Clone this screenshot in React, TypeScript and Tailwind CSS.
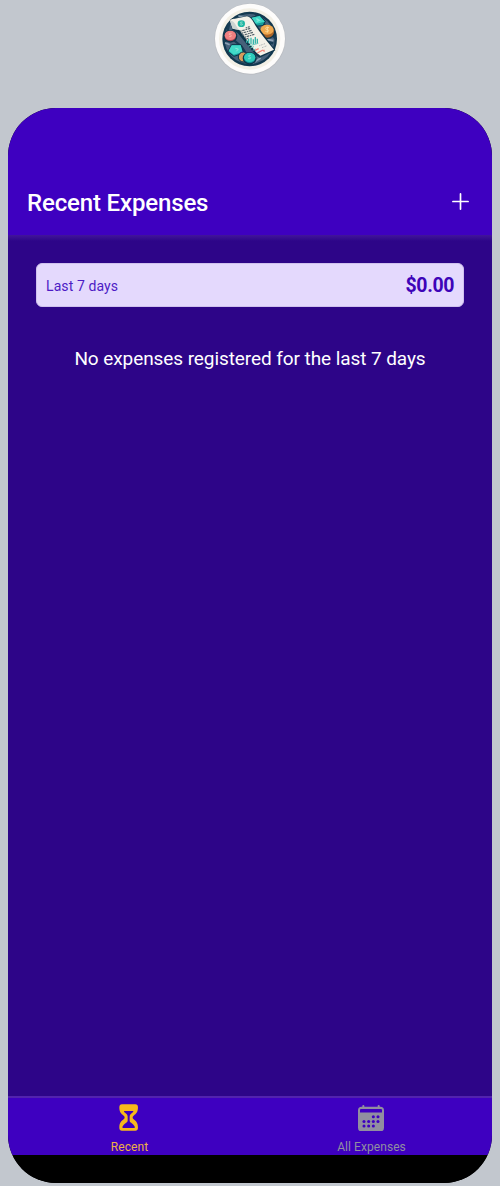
import React from "react";
import { IoAdd } from "react-icons/io5";

function HourglassIcon() {
  return (
    <svg viewBox="0 0 58 81" className="h-[27px] w-[19.3px]" aria-hidden="true">
      <path
        fill="currentColor"
        fillRule="evenodd"
        d="M9 1 H49 Q57 1 57 10 C57 25 52 29 44 35 Q38 40 44 46 C52 52 57 57 57 71 Q57 80 49 80 H9 Q1 80 1 71 C1 57 6 52 14 46 Q20 40 14 35 C6 29 1 25 1 10 Q1 1 9 1 Z M15 21 Q14 24 19 27 C25 31 26 34 26 40 V50 C26 56 12 60 10 70 Q10 72 13 72 H45 Q48 72 48 70 C46 60 32 56 32 50 V40 C32 34 33 31 39 27 Q44 24 43 21 Z"
      />
    </svg>
  );
}

function CalendarIcon() {
  return (
    <svg viewBox="0 0 78 79" className="h-[26.5px] w-[26px]" aria-hidden="true">
      <path
        fill="currentColor"
        fillRule="evenodd"
        d="M13 3 Q13 0 16 0 T19 3 V5 H59 V3 Q59 0 62 0 T65 3 V5 H67 Q78 5 78 16 V68 Q78 79 67 79 H11 Q0 79 0 68 V16 Q0 5 11 5 H13 Z M6 15 V22 H72 V15 Q72 12 69 12 H9 Q6 12 6 15 Z"
      />
      <g fill="#3e00c0">
        <circle cx="46" cy="35" r="4.6" />
        <circle cx="60" cy="35" r="4.6" />
        <circle cx="18" cy="49" r="4.6" />
        <circle cx="32" cy="49" r="4.6" />
        <circle cx="46" cy="49" r="4.6" />
        <circle cx="60" cy="49" r="4.6" />
        <circle cx="18" cy="63" r="4.6" />
        <circle cx="32" cy="63" r="4.6" />
        <circle cx="46" cy="63" r="4.6" />
      </g>
    </svg>
  );
}

function Logo() {
  return (
    <svg viewBox="0 0 270 240" className="h-20 w-[90px] shrink-0" aria-label="Expenses">
      <defs>
        <clipPath id="disc">
          <circle cx="134" cy="117" r="80" />
        </clipPath>
      </defs>
      <circle cx="135" cy="117" r="107" fill="#b5b8bd" opacity="0.6" />
      <circle cx="135" cy="116" r="105" fill="#fdfcfb" />
      <circle cx="134" cy="117" r="92" fill="#f3f0e6" />
      <circle cx="134" cy="117" r="82" fill="#12384f" />
      <g clipPath="url(#disc)">
        <circle cx="134" cy="117" r="75" fill="#46617a" />
        <path d="M48 88 L110 140 L150 205 M75 60 L60 130 M150 40 L215 120 M160 120 L205 130" stroke="#173c54" strokeWidth="7" fill="none" />
        <path d="M60 128 l14 6 M185 118 l20 4 M100 48 l30 4 M142 190 l25 -16" stroke="#8aa0b3" strokeWidth="5" />
        <path d="M140 52 L164 46 L181 64 L174 77 L148 79 L135 62 Z" fill="#169b9b" stroke="#0d3448" strokeWidth="3" />
        <path d="M140 53 L164 48 L179 65 L151 72 L138 60 Z" fill="#3dd6c5" />
        <path d="M154 56 l9 5 l-8 3" stroke="#7ee8d8" strokeWidth="4" fill="none" />
        <ellipse cx="187" cy="96" rx="22" ry="19" fill="#a96529" stroke="#0d3448" strokeWidth="4" />
        <ellipse cx="186" cy="89" rx="20" ry="15" fill="#efa950" />
        <path d="M192 83 q-10 -4 -10 2 q0 4 6 4 q6 2 1 6 q-4 1 -8 -1 M187 80 v18" stroke="#fde0a0" strokeWidth="2.5" fill="none" />
        <ellipse cx="76" cy="109" rx="19" ry="17" fill="#a7404f" stroke="#0d3448" strokeWidth="4" />
        <ellipse cx="76" cy="106" rx="17" ry="14" fill="#ee7f80" />
        <path d="M80 100 q-9 -2 -8 3 l7 3 q2 5 -7 4" stroke="#fbb5a8" strokeWidth="2.5" fill="none" />
        <path d="M80 134 L108 134 L115 160 L87 169 L69 155 Z" fill="#159d9b" stroke="#0d3448" strokeWidth="3" />
        <path d="M80 136 L107 136 L113 156 L86 164 L71 152 Z" fill="#42dac8" />
        <path d="M91 145 l9 2 l-6 7" stroke="#8be8d8" strokeWidth="3" fill="none" />
        <circle cx="115" cy="171" r="15" fill="#d69b5c" stroke="#0d3448" strokeWidth="3" />
        <ellipse cx="134" cy="175" rx="19" ry="17" fill="#128b91" stroke="#0d3448" strokeWidth="4" />
        <ellipse cx="134" cy="172" rx="17" ry="14" fill="#2ecbbb" />
        <path d="M138 166 q-9 -2 -7 3 l6 4 q1 5 -8 3" stroke="#8be8d8" strokeWidth="2.5" fill="none" />
      </g>
      <path d="M76 62 Q80 50 94 54 L126 47 Q140 49 149 67 L211 151 L164 173 Q156 171 147 159 L98 99 L82 90 Z" fill="#0e3449" />
      <path d="M75 62 Q79 55 89 56 L126 49 Q139 52 147 69 Q158 91 207 149 L166 167 L153 157 L103 90 L83 86 Z" fill="#f4f2e9" />
      <path d="M75 62 Q86 61 94 78 L101 89 L83 86 Z" fill="#cbd4d2" />
      <ellipse cx="109" cy="71" rx="11" ry="10" fill="#20b7a4" />
      <path d="M113 66 q-9 -1 -6 4 l6 3 q-1 4 -8 1" stroke="#b4eddb" strokeWidth="2" fill="none" />
      <path d="M122 84 l12 -4 M105 94 l31 -9 M109 100 l31 -9 M113 106 l31 -9 M118 112 l30 -9 M124 117 l8 -3" stroke="#53616a" strokeWidth="3.5" strokeDasharray="5 2 8 2" />
      <path d="M125 128 v-7 M131 130 v-14 M138 132 v-19 M145 133 v-15 M151 131 v-20 M157 130 v-14" stroke="#35b5aa" strokeWidth="4" />
      <path d="M130 138 l30 -8 M136 144 l11 -4 M143 151 l9 -4" stroke="#67c8bd" strokeWidth="3" />
      <path d="M150 151 l11 -5 M157 159 l17 -9 M176 149 l2 6" stroke="#f28277" strokeWidth="4" />
      <path d="M163 137 l17 -6 M171 143 l15 -6" stroke="#8b969a" strokeWidth="2" strokeDasharray="3 2" />
    </svg>
  );
}

export default function App() {
  return (
    <main className="flex h-[1186px] w-full flex-col items-center overflow-hidden bg-[#c2c7ce] font-['Roboto',sans-serif]">
      <Logo />
      <div className="mt-7 flex h-[1075px] w-[484px] shrink-0 flex-col overflow-hidden rounded-[48px] bg-black">
        <header className="flex h-[127px] shrink-0 items-end justify-between bg-[#3e00c0] pr-[18px] pb-[15px] pl-[19px] text-white">
          <h1 className="text-[24px] leading-[33px] font-medium tracking-[-0.15px]">Recent Expenses</h1>
          <button aria-label="Add expense" className="mb-[5px]">
            <IoAdd size={27} />
          </button>
        </header>
        <section className="flex min-h-0 flex-1 flex-col bg-[#2d0588]">
          <div className="h-1.5 shrink-0 bg-linear-to-b from-[#42149b] to-[#2d0588]" />
          <div className="mx-7 mt-[22px] flex h-[44px] shrink-0 items-center justify-between rounded-[6px] border border-[#cfc1ee] bg-[#e4d9fd] px-[9px] pt-[2px] text-[#3e04b8]">
            <span className="text-[14px] leading-5 tracking-[0.09px] text-[#4d1bc5]">Last 7 days</span>
            <span className="text-[19.5px] leading-6 font-bold tracking-[-0.4px]">$0.00</span>
          </div>
          <p className="mt-[38px] text-center text-[19px] leading-7 tracking-[-0.08px] text-white">No expenses registered for the last 7 days</p>
        </section>
        <nav className="grid h-[59px] shrink-0 grid-cols-2 border-t-2 border-[#5222ae] bg-[#3e00c0] text-[12px] tracking-[0.07px]">
          <button className="flex flex-col items-center pt-[6px] text-[#f7b91b]">
            <HourglassIcon />
            <span className="mt-2 pl-px leading-4 text-[#eeb045]">Recent</span>
          </button>
          <button className="flex flex-col items-center pt-[6.5px] text-[#918ea0]">
            <CalendarIcon />
            <span className="mt-2 pl-px leading-4">All Expenses</span>
          </button>
        </nav>
        <div className="h-7 shrink-0 bg-black" />
      </div>
    </main>
  );
}
